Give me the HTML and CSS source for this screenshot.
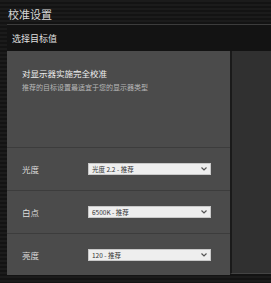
FILE: index.html
```html
<!DOCTYPE html>
<html lang="zh-CN">
<head>
    <meta charset="UTF-8">
    <title>校准设置</title>
    <link rel="stylesheet" href="styles.css">
</head>
<body>

<h1 class="title">校准设置</h1>

<div class="panel">
    <div class="panel-head">选择目标值</div>
    <div class="panel-body">
        <div class="main">
            <div class="intro">
                <h2>对显示器实施完全校准</h2>
                <p>推荐的目标设置最适宜于您的显示器类型</p>
            </div>

            <div class="row">
                <span class="label">光度</span>
                <div class="dropdown">
                    <span>光度 2.2 - 推荐</span>
                    <svg width="6" height="4" viewBox="0 0 6 4"><path d="M0.5 0.5 L3 3 L5.5 0.5" fill="none" stroke="#555" stroke-width="1.2"/></svg>
                </div>
            </div>

            <div class="row">
                <span class="label">白点</span>
                <div class="dropdown">
                    <span>6500K - 推荐</span>
                    <svg width="6" height="4" viewBox="0 0 6 4"><path d="M0.5 0.5 L3 3 L5.5 0.5" fill="none" stroke="#555" stroke-width="1.2"/></svg>
                </div>
            </div>

            <div class="row">
                <span class="label">亮度</span>
                <div class="dropdown">
                    <span>120 - 推荐</span>
                    <svg width="6" height="4" viewBox="0 0 6 4"><path d="M0.5 0.5 L3 3 L5.5 0.5" fill="none" stroke="#555" stroke-width="1.2"/></svg>
                </div>
            </div>
        </div>
        <div class="side"></div>
    </div>
</div>

</body>
</html>
```

FILE: styles.css
```css
body {
    font-family: 'Noto Sans CJK SC', 'Noto Sans', sans-serif;
    margin: 0;
    padding: 0;
    height: 283px;
    overflow: hidden;
    background: repeating-linear-gradient(to bottom, #1b1b1b 0, #1b1b1b 2px, #131313 2px, #131313 4px);
}

.title {
    margin: 0;
    height: 24px;
    padding-left: 8px;
    font-size: 11px;
    font-weight: normal;
    line-height: 29px;
    color: #d8d8d8;
}

.panel {
    margin-left: 7px;
    border-top: 1px solid #3c3c3c;
    background: #131313;
}

.panel-head {
    height: 26px;
    padding-left: 5px;
    font-size: 9px;
    line-height: 28px;
    color: #e0e0e0;
}

.panel-body {
    display: flex;
    height: 224px;
}

.main {
    width: 223px;
    background: #4b4b4b;
}

.side {
    flex: 1;
    height: 222px;
    background: #303030;
    border-left: 2px solid #1a1a1a;
    border-bottom: 1px solid #444;
}

.intro {
    height: 96px;
    padding-left: 15px;
    box-sizing: border-box;
    padding-top: 16px;
}

.intro h2 {
    margin: 0;
    font-size: 8.5px;
    font-weight: normal;
    color: #eeeeee;
    line-height: 12px;
}

.intro p {
    margin: 3px 0 0;
    font-size: 7px;
    color: #b8b8b8;
    line-height: 10px;
}

.row {
    height: 42px;
    border-top: 1px solid #3c3c3c;
    display: flex;
    align-items: center;
    padding-left: 15px;
}

.label {
    width: 66px;
    font-size: 8.5px;
    color: #dcdcdc;
}

.dropdown {
    width: 123px;
    height: 12px;
    box-sizing: border-box;
    background: #eeeeee;
    border: 1px solid #c8c8c8;
    display: flex;
    align-items: center;
    justify-content: space-between;
    padding: 0 3px 0 3px;
    font-size: 6.5px;
    color: #333;
}
```
